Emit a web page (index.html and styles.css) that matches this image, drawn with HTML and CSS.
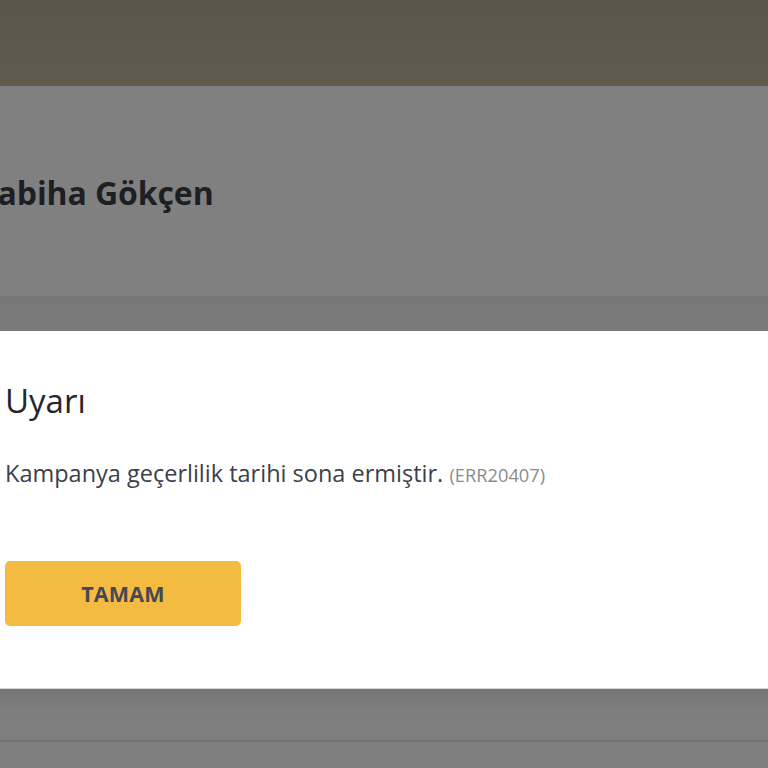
FILE: index.html
```html
<!DOCTYPE html>
<html lang="tr">
<head>
<meta charset="utf-8">
<link rel="stylesheet" href="styles.css">
<title>Uyarı</title>
</head>
<body>
<div class="page">
  <header class="topbar"></header>
  <section class="hero">
    <h1 class="hero-title">Sabiha Gökçen</h1>
  </section>
  <div class="strip"></div>
  <div class="strip2"></div>
  <div class="modal">
    <h2 class="modal-title">Uyarı</h2>
    <p class="modal-msg">Kampanya geçerlilik tarihi sona ermiştir. <span class="code">(ERR20407)</span></p>
    <button class="btn">TAMAM</button>
  </div>
  <div class="below"></div>
  <div class="below-line"></div>
  <div class="below2"></div>
</div>
</body>
</html>
```
FILE: styles.css
```css
* { box-sizing: border-box; }
html, body { margin: 0; padding: 0; }
body {
  width: 768px;
  height: 768px;
  overflow: hidden;
  background: #7f7f7f;
  font-family: "Open Sans", "Noto Sans", sans-serif;
}
.page {
  display: flex;
  flex-direction: column;
  overflow: hidden;
}
.topbar {
  height: 86px;
  background: linear-gradient(#5a5649, #5f5b4f);
}
.hero {
  height: 210px;
  background: #808080;
  display: flex;
  align-items: center;
  overflow: hidden;
}
.hero-title {
  margin: 0 0 0 -20px;
  padding-top: 2px;
  font-size: 32px;
  font-weight: 700;
  letter-spacing: -0.1px;
  color: #1e1f24;
  white-space: nowrap;
}
.strip {
  height: 8px;
  background: #777777;
}
.strip2 {
  height: 27px;
  background: #7a7a7b;
}
.modal {
  height: 358px;
  background: #ffffff;
  border-bottom: 1px solid #d8d8d8;
  padding: 0 0 0 5px;
  display: flex;
  flex-direction: column;
  align-items: flex-start;
}
.modal-title {
  margin: 47px 0 0 0;
  font-size: 33px;
  font-weight: 400;
  line-height: 46px;
  color: #25262b;
}
.modal-msg {
  margin: 33px 0 0 0;
  font-size: 23.5px;
  line-height: 32px;
  color: #3b404b;
}
.code {
  font-size: 18.3px;
  color: #8b8b8b;
}
.btn {
  margin-top: 70px;
  width: 236px;
  height: 65px;
  border: none;
  border-radius: 5px;
  background: #f3bb42;
  color: #474853;
  font-family: "Open Sans", "Noto Sans", sans-serif;
  font-weight: 700;
  font-size: 21.5px;
  letter-spacing: 0.2px;
}
.below {
  height: 51px;
  background: linear-gradient(#767676, #7d7d7d 40%, #7f7f7f);
}
.below-line {
  height: 2px;
  background: #737373;
}
.below2 {
  height: 40px;
  background: #7f7f7f;
}
```
